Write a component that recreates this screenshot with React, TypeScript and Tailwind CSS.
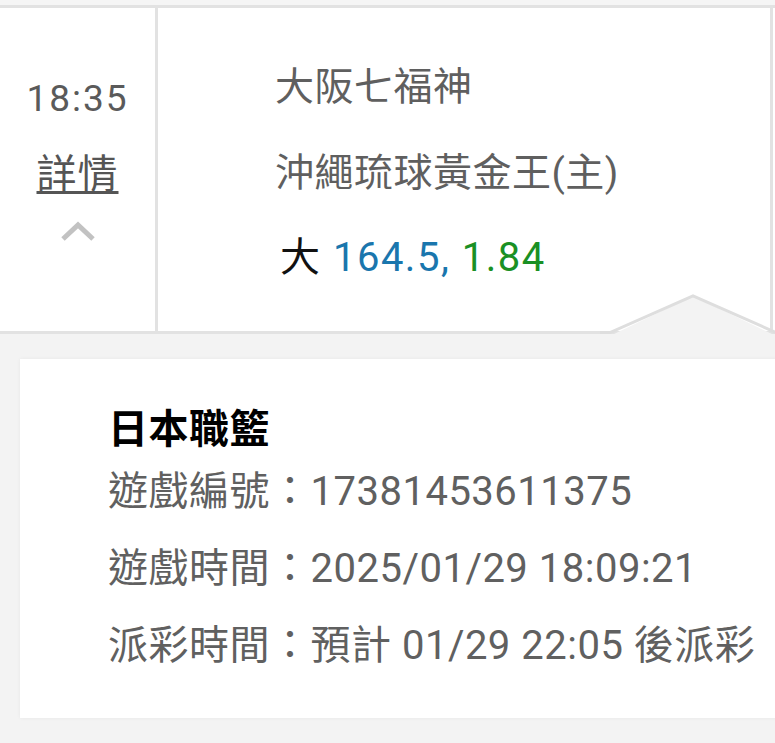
import React from "react";

const font = "font-['Roboto','Noto_Sans_CJK_TC',sans-serif]";

function Chevron() {
  return (
    <svg width="36" height="22" viewBox="0 0 36 22" className="block">
      <polyline
        points="3,18 18,4 33,18"
        fill="none"
        stroke="#c2c2c2"
        strokeWidth="5"
      />
    </svg>
  );
}

function Notch() {
  // little pointer that joins the match row with the detail card
  return (
    <svg
      width="176"
      height="50"
      viewBox="0 0 176 50"
      className="absolute left-[600px] top-[285px]"
    >
      <polygon points="10,46 93,6 176,46" fill="#f3f3f3" />
      <polyline
        points="0,42.5 10,42.5 93,6 176,42.5"
        fill="none"
        stroke="#dedede"
        strokeWidth="3"
      />
    </svg>
  );
}

export default function App() {
  return (
    <div className={`w-[775px] h-[743px] overflow-hidden bg-[#f3f3f3] ${font}`}>
      <div className="h-[5px] bg-[#f5f5f5]" />

      <div className="relative">
        {/* match row */}
        <div className="flex h-[329px] bg-white border-t-[3px] border-b-[3px] border-[#e2e2e2] pr-[2px]">
          <div className="w-[158px] shrink-0 flex flex-col items-center border-r-[3px] border-[#e2e2e2]">
            <div className="mt-[72px] text-[37px] leading-[37px] tracking-[2px] text-[#5a5a5a]">
              18:35
            </div>
            <div className="mt-[38px] text-[40px] leading-[40px] tracking-[1px] text-[#555] underline decoration-[3px] underline-offset-[3px]">
              詳情
            </div>
            <div className="mt-[26px]">
              <Chevron />
            </div>
          </div>

          <div className="flex-1 flex flex-col pl-[117px] border-r-[3px] border-[#e2e2e2]">
            <div className="mt-[60px] text-[39px] leading-[39px] tracking-[0.5px] text-[#5f5f5f]">
              大阪七福神
            </div>
            <div className="mt-[47px] text-[39px] leading-[39px] tracking-[0.5px] text-[#5f5f5f]">
              沖繩琉球黃金王(主)
            </div>
            <div className="mt-[45px] ml-[5px] text-[40px] leading-[40px] tracking-[1.5px] text-[#111]">
              大 <span className="text-[#1a76ad]">164.5,</span>{" "}
              <span className="text-[#1a9024]">1.84</span>
            </div>
          </div>
        </div>

        <Notch />
      </div>

      {/* detail card */}
      <div className="mt-[25px] ml-[20px] w-[760px] h-[359px] bg-white shadow-[0_0_4px_rgba(0,0,0,0.05)] pl-[88px] pt-[51px] text-[40px] tracking-[0.5px]">
        <div className="leading-[40px] font-bold text-black">日本職籃</div>
        <div className="mt-[3px] leading-[77px] text-[#606060]">
          <div>遊戲編號：17381453611375</div>
          <div>遊戲時間：2025/01/29 18:09:21</div>
          <div>派彩時間：預計 01/29 22:05 後派彩</div>
        </div>
      </div>
    </div>
  );
}
